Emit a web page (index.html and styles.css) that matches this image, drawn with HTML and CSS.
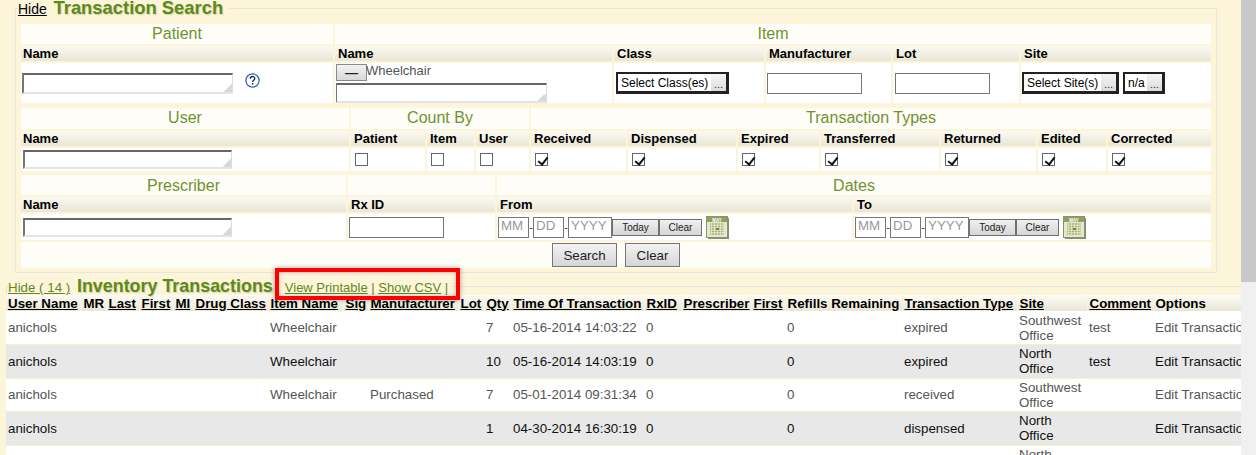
FILE: index.html
```html
<!DOCTYPE html>
<html lang="en">
<head>
<meta charset="utf-8">
<title>Inventory Transactions</title>
<link rel="stylesheet" href="styles.css">
</head>
<body>
<div class="page">
  <main class="main">
    <fieldset class="search">
      <legend class="search-legend"><a class="hide-link" href="#">Hide</a> <span class="big-title">Transaction Search</span></legend>

      <section class="grid grid-one">
        <div class="title">Patient</div>
        <div class="title span-5">Item</div>
        <div class="head first">Name</div>
        <div class="head">Name</div>
        <div class="head">Class</div>
        <div class="head">Manufacturer</div>
        <div class="head">Lot</div>
        <div class="head">Site</div>
        <div class="cell">
          <textarea class="ta"></textarea>
          <svg class="help" width="15" height="15" viewBox="0 0 15 15" aria-hidden="true"><circle cx="7.5" cy="7.5" r="6.6" fill="#fff" stroke="#3b62c4" stroke-width="1.3"/><path d="M5.3 5.8c0-3 4.5-3 4.5-.3 0 1.8-2.2 1.8-2.2 3.6" fill="none" stroke="#1c2a70" stroke-width="1.3"/><rect x="6.9" y="10" width="1.5" height="1.5" fill="#1c2a70"/></svg>
        </div>
        <div class="cell cell-stack">
          <div class="item-line"><button class="mini" type="button">—</button><span class="item-name">Wheelchair</span></div>
          <textarea class="ta ta-item"></textarea>
        </div>
        <div class="cell pad2"><div class="picker picker-class"><span class="picker-text">Select Class(es)</span><span class="dots">...</span></div></div>
        <div class="cell"><input class="box" type="text"></div>
        <div class="cell pad2"><input class="box" type="text"></div>
        <div class="cell">
          <div class="picker picker-site"><span class="picker-text">Select Site(s)</span><span class="dots">...</span></div>
          <div class="picker picker-na"><span class="picker-text">n/a</span><span class="dots">...</span></div>
        </div>
      </section>

      <section class="grid grid-two">
        <div class="title">User</div>
        <div class="title span-3">Count By</div>
        <div class="title span-7">Transaction Types</div>
        <div class="head first">Name</div>
        <div class="head">Patient</div>
        <div class="head">Item</div>
        <div class="head">User</div>
        <div class="head">Received</div>
        <div class="head">Dispensed</div>
        <div class="head">Expired</div>
        <div class="head">Transferred</div>
        <div class="head">Returned</div>
        <div class="head">Edited</div>
        <div class="head">Corrected</div>
        <div class="cell pad2"><textarea class="ta ta-low"></textarea></div>
        <div class="cell check"><input class="cb" type="checkbox"></div>
        <div class="cell check"><input class="cb" type="checkbox"></div>
        <div class="cell check"><input class="cb" type="checkbox"></div>
        <div class="cell check"><input class="cb" type="checkbox" checked></div>
        <div class="cell check"><input class="cb" type="checkbox" checked></div>
        <div class="cell check"><input class="cb" type="checkbox" checked></div>
        <div class="cell check"><input class="cb" type="checkbox" checked></div>
        <div class="cell check"><input class="cb" type="checkbox" checked></div>
        <div class="cell check"><input class="cb" type="checkbox" checked></div>
        <div class="cell check"><input class="cb" type="checkbox" checked></div>
      </section>

      <section class="grid grid-three">
        <div class="title title-low">Prescriber</div>
        <div class="title"></div>
        <div class="title title-low span-2">Dates</div>
        <div class="head first">Name</div>
        <div class="head">Rx ID</div>
        <div class="head">From</div>
        <div class="head">To</div>
        <div class="cell pad2"><textarea class="ta ta-low"></textarea></div>
        <div class="cell"><input class="box" type="text"></div>
        <div class="cell">
          <input class="date date-s" type="text" placeholder="MM"><span class="dash">-</span><input class="date date-s" type="text" placeholder="DD"><span class="dash">-</span><input class="date date-l" type="text" placeholder="YYYY"><button class="small small-today" type="button">Today</button><button class="small small-clear" type="button">Clear</button>
          <svg class="cal" width="23" height="23" viewBox="0 0 23 23" aria-hidden="true"><rect x="2" y="2" width="21" height="21" fill="#8b8b7c"/><rect x=".5" y=".5" width="21" height="21" fill="#e4e8cc" stroke="#87965c"/><rect x="1" y="1" width="20" height="5" fill="#8f9f64"/><text x="11" y="5.6" class="cal-text" text-anchor="middle">MAY</text><path d="M4 8h14M4 10.5h14M4 13h14M4 15.500h14M4 18h14" stroke="#a3b377" stroke-width="1.400"/><path d="M5.500 7v12M8.500 7v12M11.500 7v12M14.500 7v12M17 7v12" stroke="#e4e8cc" stroke-width=".8"/><rect x="10.500" y="12" width="2" height="2" fill="#c0392b"/></svg>
        </div>
        <div class="cell">
          <input class="date date-s" type="text" placeholder="MM"><span class="dash">-</span><input class="date date-s" type="text" placeholder="DD"><span class="dash">-</span><input class="date date-l" type="text" placeholder="YYYY"><button class="small small-today" type="button">Today</button><button class="small small-clear" type="button">Clear</button>
          <svg class="cal" width="23" height="23" viewBox="0 0 23 23" aria-hidden="true"><rect x="2" y="2" width="21" height="21" fill="#8b8b7c"/><rect x=".5" y=".5" width="21" height="21" fill="#e4e8cc" stroke="#87965c"/><rect x="1" y="1" width="20" height="5" fill="#8f9f64"/><text x="11" y="5.6" class="cal-text" text-anchor="middle">MAY</text><path d="M4 8h14M4 10.5h14M4 13h14M4 15.500h14M4 18h14" stroke="#a3b377" stroke-width="1.400"/><path d="M5.500 7v12M8.500 7v12M11.500 7v12M14.500 7v12M17 7v12" stroke="#e4e8cc" stroke-width=".8"/><rect x="10.500" y="12" width="2" height="2" fill="#c0392b"/></svg>
        </div>
        <div class="actions span-4">
          <button class="action action-search" type="button">Search</button>
          <button class="action action-clear" type="button">Clear</button>
        </div>
      </section>
    </fieldset>

    <fieldset class="results">
      <legend class="results-legend"><a class="green-link" href="#">Hide ( 14 )</a> <span class="big-title big-title-two">Inventory Transactions</span><span class="links"><a class="green-link" href="#">View Printable</a> | <a class="green-link" href="#">Show CSV</a> |</span></legend>
      <table class="tx">
        <colgroup>
          <col class="c75"><col class="c25"><col class="c33"><col class="c34"><col class="c20"><col class="c75"><col class="c75"><col class="c25"><col class="c90"><col class="c26"><col class="c27"><col class="c133"><col class="c37"><col class="c70"><col class="c34"><col class="c117"><col class="c115"><col class="c70"><col class="c66"><col class="c130">
        </colgroup>
        <thead>
          <tr>
            <th><a href="#">User Name</a></th><th>MR</th><th><a href="#">Last</a></th><th><a href="#">First</a></th><th><a href="#">MI</a></th><th><a href="#">Drug Class</a></th><th><a href="#">Item Name</a></th><th><a href="#">Sig</a></th><th><a href="#">Manufacturer</a></th><th><a href="#">Lot</a></th><th><a href="#">Qty</a></th><th><a href="#">Time Of Transaction</a></th><th><a href="#">RxID</a></th><th><a href="#">Prescriber</a></th><th><a href="#">First</a></th><th>Refills Remaining</th><th><a href="#">Transaction Type</a></th><th><a href="#">Site</a></th><th><a href="#">Comment</a></th><th>Options</th>
          </tr>
        </thead>
        <tbody>
          <tr>
            <td>anichols</td><td></td><td></td><td></td><td></td><td></td><td>Wheelchair</td><td></td><td></td><td></td><td>7</td><td>05-16-2014 14:03:22</td><td>0</td><td></td><td></td><td>0</td><td>expired</td><td>Southwest Office</td><td>test</td><td>Edit Transaction</td>
          </tr>
          <tr>
            <td>anichols</td><td></td><td></td><td></td><td></td><td></td><td>Wheelchair</td><td></td><td></td><td></td><td>10</td><td>05-16-2014 14:03:19</td><td>0</td><td></td><td></td><td>0</td><td>expired</td><td>North Office</td><td>test</td><td>Edit Transaction</td>
          </tr>
          <tr>
            <td>anichols</td><td></td><td></td><td></td><td></td><td></td><td>Wheelchair</td><td></td><td>Purchased</td><td></td><td>7</td><td>05-01-2014 09:31:34</td><td>0</td><td></td><td></td><td>0</td><td>received</td><td>Southwest Office</td><td></td><td>Edit Transaction</td>
          </tr>
          <tr>
            <td>anichols</td><td></td><td></td><td></td><td></td><td></td><td></td><td></td><td></td><td></td><td>1</td><td>04-30-2014 16:30:19</td><td>0</td><td></td><td></td><td>0</td><td>dispensed</td><td>North Office</td><td></td><td>Edit Transaction</td>
          </tr>
          <tr>
            <td>anichols</td><td></td><td></td><td></td><td></td><td></td><td></td><td></td><td></td><td></td><td>1</td><td>04-30-2014 16:30:19</td><td>0</td><td></td><td></td><td>0</td><td>dispensed</td><td>North Office</td><td></td><td>Edit Transaction</td>
          </tr>
        </tbody>
      </table>
    </fieldset>

    <div class="callout"></div>
  </main>
  <div class="scrollbar"><div class="thumb"></div></div>
</div>
</body>
</html>
```

FILE: styles.css
```css
* { box-sizing: border-box; }

html, body {
  margin: 0;
  height: 455px;
  overflow: hidden;
}

body {
  font-family: "Liberation Sans", Arial, sans-serif;
  font-size: 13.33px;
  color: #000;
  background: #fcf5da;
}

.page {
  display: flex;
  height: 455px;
}

.main {
  position: relative;
  width: 1241px;
  height: 455px;
  overflow: hidden;
  flex: none;
}

.scrollbar {
  width: 15px;
  flex: none;
  background: #f0f0f0;
}

.thumb {
  height: 282px;
  background: #c8c8c8;
}

/* Search box */
.search {
  margin: 0 24px 0 15px;
  padding: 8px 5px 4px;
  border: 1px solid #e6e7dc;
  min-width: 0;
}

.search-legend {
  margin-left: -3px;
  padding: 0 6px 0 0;
  height: 16px;
  line-height: 16px;
  white-space: nowrap;
}

.hide-link {
  color: #000;
  font-size: 14px;
  text-decoration: underline;
  margin-right: 3px;
}

.big-title {
  font-size: 18.4px;
  font-weight: bold;
  color: #5d8a1b;
  text-shadow: 1px 1px 1px rgba(90, 110, 60, .25);
}

.big-title-two {
  font-size: 17.9px;
  margin-left: 3px;
}

.grid {
  display: grid;
  gap: 2px;
}

.grid-one {
  grid-template-columns: 312px 277px 150px 125px 126px 190px;
  grid-template-rows: 20px 15px 40px;
  margin-bottom: 5px;
}

.grid-two {
  grid-template-columns: 328px 74px 47px 53px 95px 108px 81px 118px 95px 68px 103px;
  grid-template-rows: 21px 15px 23px;
  margin-bottom: 4px;
}

.grid-three {
  grid-template-columns: 325px 147px 355px 357px;
  grid-template-rows: 20px 15px 26px 26px;
}

.span-2 { grid-column: span 2; }
.span-3 { grid-column: span 3; }
.span-4 { grid-column: span 4; }
.span-5 { grid-column: span 5; }
.span-7 { grid-column: span 7; }

.title {
  background: #fffdf7;
  color: #6d9430;
  font-size: 16px;
  line-height: 19px;
  text-align: center;
}

.title-low { line-height: 21px; }

.head {
  background: linear-gradient(#fbfaf2, #e9e6d4);
  font-size: 13px;
  font-weight: bold;
  line-height: 15px;
  padding-left: 3px;
  white-space: nowrap;
}

.head.first { padding-left: 2px; }

.cell {
  display: flex;
  align-items: center;
  background: #fff;
  padding-left: 1px;
  min-width: 0;
}

.cell-stack {
  display: block;
  padding-top: 1px;
}

.pad2 { padding-left: 2px; }
.check { padding-left: 4px; }

.ta {
  display: block;
  width: 211px;
  height: 21px;
  margin: 0;
  padding: 0;
  border-style: solid;
  border-width: 2px 1px 2px 2px;
  border-color: #666 #ddd #e4e4e4 #777;
  background: #fff linear-gradient(135deg, transparent 50%, #d8d8d8 50%) no-repeat right bottom / 8px 8px;
  resize: none;
}

.ta-item {
  width: 211px;
  height: 20px;
  border-left-width: 1px;
  margin-top: 1px;
}

.ta-low {
  width: 209px;
  height: 19px;
}

.help {
  margin-left: 12px;
  margin-bottom: 6px;
}

.item-line {
  display: flex;
  align-items: flex-start;
  height: 18px;
}

.mini {
  width: 31px;
  height: 17px;
  margin: 0;
  padding: 0;
  border: 1px solid #8a8a8a;
  background: linear-gradient(#f2f2f2, #d8d8d8);
  font-family: inherit;
  font-size: 13px;
  font-weight: bold;
  line-height: 13px;
  color: #222;
}

.item-name {
  color: #555;
  font-size: 13px;
  line-height: 14px;
  margin-left: -1px;
}

.picker {
  display: flex;
  align-items: stretch;
  height: 22px;
  border-style: solid;
  border-width: 2px 3px 3px 2px;
  border-color: #222;
  background: #fff;
  font-size: 12px;
  line-height: 18px;
  color: #000;
}

.picker-class { width: 113px; }
.picker-site { width: 97px; }
.picker-na { width: 42px; margin-left: 4px; }

.picker-text {
  flex: 1;
  padding-left: 3px;
  white-space: nowrap;
  overflow: hidden;
}

.dots {
  width: 15px;
  flex: none;
  background: linear-gradient(#f5f5f5, #dcdcdc);
  text-align: center;
  font-size: 11px;
  line-height: 20px;
  color: #333;
}

.box {
  width: 95px;
  height: 21px;
  margin: 0;
  padding: 0 2px;
  border: 1px solid #777;
  background: #fff;
}

.cb {
  appearance: none;
  position: relative;
  width: 13px;
  height: 13px;
  margin: 0;
  border: 1px solid #666;
  background: #fff;
}

.cb:checked::before {
  content: "";
  position: absolute;
  left: 3.500px;
  top: .5px;
  width: 4px;
  height: 8px;
  border: solid #111;
  border-width: 0 2px 2px 0;
  transform: rotate(38deg);
}

.date {
  height: 21px;
  margin: 0;
  padding: 0 2px 4px;
  border: 1px solid #777;
  background: #fff;
  font-family: inherit;
  font-size: 13.33px;
}

.date::placeholder {
  color: #999;
  opacity: 1;
}

.date-s { width: 31px; }
.date-l { width: 44px; }

.dash {
  width: 4px;
  font-size: 11px;
  line-height: 24px;
  text-align: center;
  color: #333;
}

.small {
  height: 17px;
  margin: 0;
  padding: 0;
  border: 1px solid #707070;
  background: linear-gradient(#f0f0f0, #d6d6d6);
  font-family: inherit;
  font-size: 10px;
  color: #222;
}

.small-today { width: 47px; }
.small-clear { width: 43px; }

.cal {
  margin-left: 4px;
  flex: none;
}

.cal-text {
  font-family: "Liberation Sans", Arial, sans-serif;
  font-size: 4.500px;
  font-weight: bold;
  fill: #fff;
}

.actions {
  display: flex;
  justify-content: center;
  align-items: center;
  gap: 8px;
  background: #fffdf7;
}

.action {
  height: 24px;
  margin: 0;
  padding: 0;
  border: 1px solid #777;
  background: linear-gradient(#f2f2f2, #d6d6d6);
  font-family: inherit;
  font-size: 13.33px;
  color: #222;
}

.action-search { width: 65px; }
.action-clear { width: 55px; }

/* Results */
.results {
  margin: 4px -30px 0 6px;
  padding: 0;
  border: 1px solid #e6e7dc;
  min-width: 0;
}

.results-legend {
  margin-left: 1px;
  padding: 0;
  height: 18px;
  line-height: 18px;
  white-space: nowrap;
}

.green-link {
  color: #5d8a1b;
  text-decoration: underline;
}

.links {
  color: #5d8a1b;
  margin-left: 12px;
  padding-right: 4px;
  font-size: 13px;
}

.tx {
  width: 1257px;
  margin-left: -1px;
  table-layout: fixed;
  border-collapse: collapse;
  font-size: 13.33px;
}

.tx th {
  height: 16px;
  padding: 0 0 0 2px;
  background: linear-gradient(#fdfcf5, #e9e6d4);
  border-right: 1px solid #f6f4e6;
  font-size: 13.33px;
  font-weight: bold;
  line-height: 15px;
  text-align: left;
  white-space: nowrap;
  overflow: hidden;
}

.tx th a {
  color: #000;
  text-decoration: underline;
}

.tx td {
  height: 33.500px;
  padding: 0 2px;
  line-height: 15px;
  color: #555;
  background: #fff;
  border-bottom: 1px solid #f3f0cc;
  vertical-align: middle;
}

.tx tbody tr:nth-child(even) td {
  background: #e8e8e8;
  color: #111;
}

.tx td:last-child { white-space: nowrap; }

.c20 { width: 20px; }
.c25 { width: 25px; }
.c26 { width: 26px; }
.c27 { width: 27px; }
.c33 { width: 33px; }
.c34 { width: 34px; }
.c37 { width: 37px; }
.c66 { width: 66px; }
.c70 { width: 70px; }
.c75 { width: 75px; }
.c90 { width: 90px; }
.c115 { width: 115px; }
.c117 { width: 117px; }
.c130 { width: 130px; }
.c133 { width: 133px; }

/* Red annotation drawn over the page */
.callout {
  position: absolute;
  left: 275px;
  top: 268px;
  width: 185px;
  height: 32px;
  border: 4px solid #f00;
  box-shadow: 0 0 5px rgba(0, 0, 0, .35), inset 0 0 4px rgba(0, 0, 0, .25);
}
```
